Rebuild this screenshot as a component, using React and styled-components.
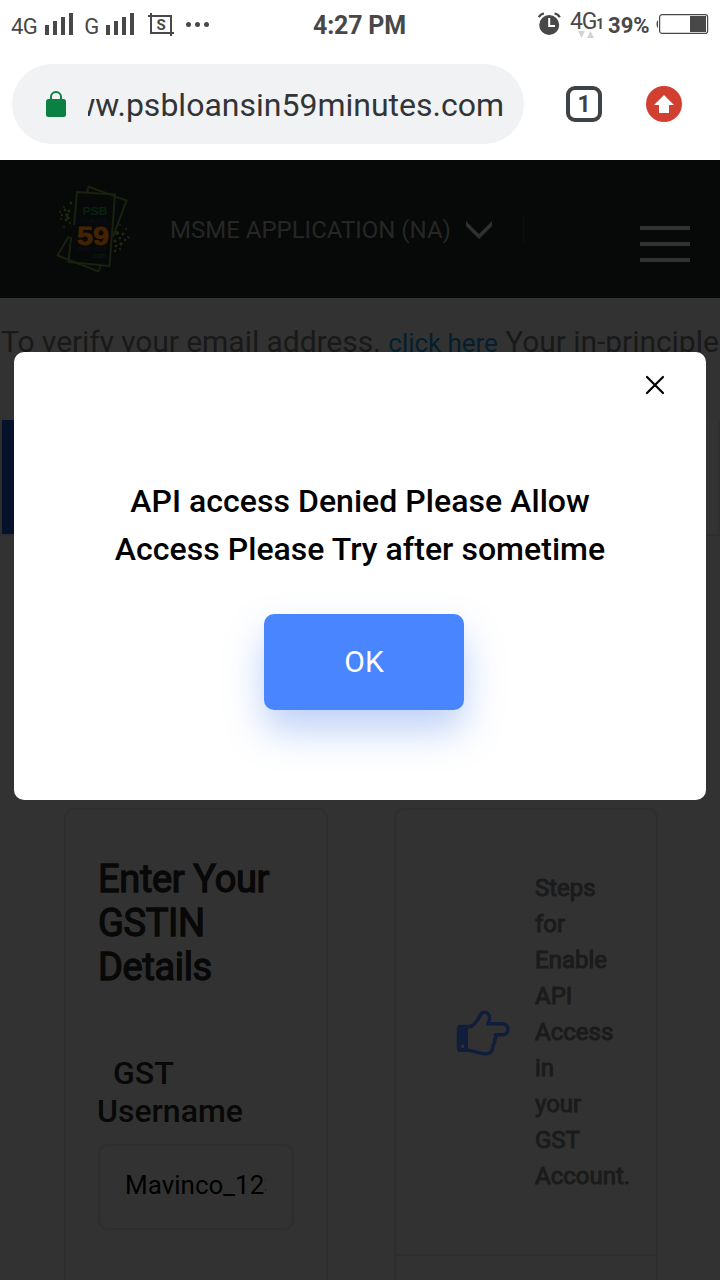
import React from "react";
import styled, { createGlobalStyle } from "styled-components";

const Global = createGlobalStyle`
  * { box-sizing: border-box; }
  body { margin: 0; background: #323232; font-family: Roboto, "Liberation Sans", sans-serif; }
`;

const Screen = styled.div`
  position: relative;
  width: 720px;
  height: 1280px;
  overflow: hidden;
  display: flex;
  flex-direction: column;
  background: #323232;
`;

const StatusBar = styled.header`
  flex: none;
  height: 50px;
  background: #fff;
  color: #484848;
  display: flex;
  justify-content: space-between;
  padding: 0 12px 0 11px;
`;

const StatusGroup = styled.div`
  display: flex;
  align-items: flex-start;
  width: ${(p) => p.$width || "auto"};
`;

const StatusText = styled.span`
  font-size: ${(p) => p.$size}px;
  font-weight: ${(p) => p.$weight || 400};
  line-height: 28px;
  letter-spacing: ${(p) => p.$spacing || 0}px;
  margin: ${(p) => p.$margin || 0};
  white-space: nowrap;
`;

const Glyph = styled.svg`
  display: block;
  flex: none;
  margin: ${(p) => p.$margin || 0};
`;

const AddressRow = styled.div`
  flex: none;
  height: 110px;
  padding: 14px 38px 16px 12px;
  background: #fff;
  display: flex;
  align-items: center;
`;

const AddressField = styled.div`
  width: 512px;
  height: 80px;
  border-radius: 40px;
  background: #f1f2f4;
  display: flex;
  align-items: center;
  padding: 0 20px 0 34px;
`;

const Url = styled.div`
  flex: 1;
  margin-left: 22px;
  overflow: hidden;
  display: flex;
  justify-content: flex-end;
  font-size: 32px;
  line-height: 44px;
  color: #333436;
  white-space: nowrap;
  padding-top: 2px;
`;

const TabCount = styled.div`
  width: 36px;
  height: 36px;
  margin: 0 44px 0 42px;
  border: 4px solid #3f4346;
  border-radius: 9px;
  color: #3f4346;
  font-size: 23px;
  font-weight: 700;
  line-height: 30px;
  text-align: center;
`;

const SiteHeader = styled.nav`
  flex: none;
  height: 138px;
  background: #070908;
  display: flex;
  align-items: flex-start;
  padding: 20px 30px 0 50px;
`;

const MenuLabel = styled.span`
  margin: 36px 0 0 30px;
  width: 280px;
  font-size: 24px;
  line-height: 28px;
  color: #262626;
  white-space: nowrap;
`;

const HeaderRule = styled.span`
  width: 1px;
  height: 28px;
  margin: 36px 0 0 30px;
  background: #0d0f0e;
`;

const Burger = styled.div`
  margin: 46px 0 0 auto;
  width: 50px;
  height: 36px;
  display: flex;
  flex-direction: column;
  justify-content: space-between;
`;

const BurgerLine = styled.span`
  height: 4px;
  background: #323232;
`;

const Notice = styled.p`
  flex: none;
  margin: 0;
  height: 122px;
  padding: 24px 0 0 1px;
  font-size: 30px;
  line-height: 40px;
  letter-spacing: -0.05px;
  color: #191919;
  white-space: nowrap;
`;

const NoticeLink = styled.a`
  font-size: 26px;
  color: #051e2d;
`;

const Tabs = styled.div`
  flex: none;
  height: 116px;
  padding: 0 2px;
  display: flex;
  border-bottom: 2px solid #2e2e2e;
  background: #2f2f2f;
`;

const Tab = styled.div`
  width: ${(p) => (p.$active ? "240px" : "auto")};
  flex: ${(p) => (p.$active ? "none" : "1")};
  background: ${(p) => (p.$active ? "#061229" : "#333333")};
`;

const Cards = styled.main`
  flex: 1;
  display: flex;
  align-items: flex-start;
  gap: 66px;
  padding: 272px 0 0 64px;
`;

const Card = styled.section`
  flex: none;
  width: 264px;
  height: 520px;
  border: 2px solid #2e2e2e;
  border-radius: 10px;
`;

const FormCard = styled(Card)`
  padding: 47px 32px 0 32px;
`;

const FormTitle = styled.h2`
  margin: 0 0 65px;
  font-size: 38px;
  line-height: 44px;
  font-weight: 400;
  letter-spacing: -0.35px;
  color: #080808;
  -webkit-text-stroke: 1.3px #080808;
`;

const FieldLabel = styled.label`
  display: block;
  margin-left: -1px;
  font-size: 32px;
  line-height: 38px;
  font-weight: 500;
  color: #080808;
`;

const FieldIndent = styled.span`
  display: inline-block;
  width: 16px;
`;

const Field = styled.div`
  width: 196px;
  height: 86px;
  margin-top: 14px;
  border: 2px solid #2e2e2e;
  border-radius: 10px;
  padding: 0 26px 0 25px;
  font-size: 26px;
  line-height: 79px;
  color: #000;
`;

const FieldValue = styled.div`
  overflow: hidden;
  white-space: nowrap;
`;

const StepHead = styled.div`
  height: 446px;
  border-bottom: 2px solid #2e2e2e;
  display: flex;
  align-items: center;
  padding: 0 0 1px 60px;
`;

const StepText = styled.div`
  width: 60px;
  margin-left: 25px;
  font-size: 24px;
  line-height: 36px;
  color: #1b1b1b;
  -webkit-text-stroke: 1px #1b1b1b;
`;

const Dialog = styled.div`
  position: absolute;
  left: 14px;
  top: 352px;
  width: 692px;
  height: 448px;
  border-radius: 10px;
  background: #fff;
  display: flex;
  flex-direction: column;
  align-items: center;
`;

const CloseButton = styled.button`
  align-self: flex-end;
  margin: 22px 40px 0 0;
  padding: 0;
  border: 0;
  width: 22px;
  height: 22px;
  background: none;
`;

const Message = styled.p`
  margin: 81px 0 0;
  width: 520px;
  text-align: center;
  font-size: 32px;
  line-height: 48px;
  font-weight: 500;
  letter-spacing: 0.04px;
  color: #000;
`;

const OkButton = styled.button`
  margin: 41px 0 0 8px;
  width: 200px;
  height: 96px;
  flex: none;
  border: 0;
  border-radius: 10px;
  background: #4885ff;
  box-shadow: 0 20px 38px rgba(66, 121, 232, 0.35);
  color: #fff;
  font: 400 30px/96px Roboto, sans-serif;
  padding: 0;
`;

const Signal = ({ margin }) => (
  <Glyph $margin={margin} width="29" height="22" viewBox="0 0 29 22" fill="#484848">
    <rect x="0" y="12" width="4" height="10" />
    <rect x="8" y="8" width="4" height="14" />
    <rect x="16" y="4" width="4" height="18" />
    <rect x="24" y="0" width="4" height="22" />
  </Glyph>
);

const leftDots = [[69, 211, 1.5], [67, 215, 1.8], [66, 220, 1.3], [70, 223, 0.9], [64, 227, 0.9], [61, 219, 0.9], [60, 212, 1], [64, 207, 0.9], [71, 203, 1.4], [65, 210, 1.4], [62, 215, 1.2], [68, 218, 1.8]];
const rightDots = [[117, 233, 2], [123, 234, 1.5], [120, 238, 1.3], [115, 241, 1.5], [121, 244, 1.7], [116, 246, 1.3], [115, 251, 1.2], [120, 249, 1], [126, 229, 1], [128, 237, 1], [125, 240, 1.3], [129, 238, 0.8], [120, 225, 0.8]];

const Logo = () => (
  <Glyph width="90" height="98" viewBox="50 180 90 98">
    <g fill="none" stroke="#18220e" strokeWidth="2">
      <path d="M87 193 L88.5 186.5 L126.5 200.5 L113 237" />
      <path d="M69 236 L57.5 255.5 L98.5 271.5 L100.5 266" />
      <path d="M74 225 L77 192 L115 194.5 L109.5 266 L68.5 262 L71 237" />
    </g>
    <g fill="#20290f">
      {leftDots.concat(rightDots).map(([x, y, r], i) => (
        <circle key={i} cx={x} cy={y} r={r} />
      ))}
    </g>
    <g fontFamily="Liberation Sans, sans-serif" fontWeight="700">
      <text x="82.5" y="215" fontSize="11.5" textLength="25" lengthAdjust="spacingAndGlyphs" fill="#06230f">PSB</text>
      <text x="75.5" y="222.500" fontSize="7.5" textLength="32" lengthAdjust="spacingAndGlyphs" fill="#090d1a">LOANS</text>
      <text x="71" y="229" fontSize="5" fill="#090d1a">IN</text>
      <text x="77" y="244.6" fontSize="26" textLength="32" lengthAdjust="spacingAndGlyphs" stroke="#432303" strokeWidth="0.8" fill="#432303">59</text>
      <text x="77" y="251" fontSize="5.5" textLength="30" lengthAdjust="spacingAndGlyphs" fill="#090d1a">MINUTES</text>
      <text x="91" y="257.5" fontSize="7.5" textLength="15" lengthAdjust="spacingAndGlyphs" fontWeight="400" fill="#06230f">.com</text>
    </g>
  </Glyph>
);

const PointingHand = () => (
  <Glyph $margin="2px 0 0" width="54" height="48" viewBox="456 1009 54 48">
    <path d="M459.5 1026.5 H471 C475 1024 478.500 1019 480.500 1014.800 C482 1011.500 486 1011.500 488.500 1014.300 C490.500 1017 489.500 1020.500 487.800 1023.700 H502.500 C509.800 1024.500 509.800 1034.500 502.500 1034.800 H495.300 C496.500 1037 495.500 1038.500 494.500 1039.500 C495.500 1042 494 1043.800 493 1045 C493.500 1050 491 1053.600 486 1053.800 C480 1054.200 475 1051 468 1050.300 H459.500 Z" fill="none" stroke="#101d3b" strokeWidth="3.4" strokeLinejoin="round" />
    <path fillRule="evenodd" fill="#101d3b" d="M460 1025.500 H468 V1051.500 H460 Q456.800 1051.500 456.800 1048.500 V1028.500 Q456.800 1025.500 460 1025.500 Z M462.400 1044.200 a2 2 0 1 0 0.010 0 Z" />
  </Glyph>
);

export default function App() {
  return (
    <Screen>
      <Global />
      <StatusBar>
        <StatusGroup $width="302px">
          <StatusText $size={22} $spacing={-0.6} $margin="13px 0 0">4G</StatusText>
          <Signal margin="13px 0 0 8px" />
          <StatusText $size={22} $spacing={-0.6} $margin="13px 0 0 10px">G</StatusText>
          <Signal margin="13px 0 0 7px" />
          <Glyph $margin="13px 0 0 13px" width="27" height="24" viewBox="0 0 27 24" fill="none" stroke="#484848" strokeWidth="2">
            <path d="M0 3H23V23M3 0V20H26" />
            <text x="8.500" y="16.500" fontFamily="Roboto, sans-serif" fontSize="15" fontWeight="700" fill="#484848" stroke="none">S</text>
          </Glyph>
          <Glyph $margin="21px 0 0 10px" width="26" height="7" viewBox="0 0 26 7" fill="#484848">
            <circle cx="3.500" cy="3.500" r="2.500" />
            <circle cx="12.500" cy="3.500" r="2.500" />
            <circle cx="21.500" cy="3.500" r="2.500" />
          </Glyph>
        </StatusGroup>
        <StatusText $size={25} $weight={700} $spacing={-0.2} $margin="12px auto 0 0">4:27 PM</StatusText>
        <StatusGroup $width="171px">
          <Glyph $margin="12px 0 0 1px" width="24" height="24" viewBox="0 0 24 24">
            <circle cx="11.200" cy="13" r="10" fill="#484848" />
            <path d="M0.800 5.200Q2.500 2 6 1.500M16.500 1.500Q20 2 21.800 5.200" fill="none" stroke="#484848" strokeWidth="2.200" />
            <path d="M11.200 6V14H17" fill="none" stroke="#fff" strokeWidth="2" />
          </Glyph>
          <StatusText $size={23} $spacing={-1.3} $margin="8px 0 0 8px">4G</StatusText>
          <StatusText $size={14} $weight={700} $margin="10px 0 0 0">1</StatusText>
          <Glyph $margin="31px 0 0 -27px" width="18" height="8" viewBox="0 0 18 8" fill="#d2d2d2">
            <path d="M1 0H8L4.500 7ZM10 7H17L13.500 0Z" />
          </Glyph>
          <StatusText $size={22} $weight={700} $margin="12px 0 0 13px">39%</StatusText>
          <Glyph $margin="13px 0 0 6px" width="53" height="22" viewBox="0 0 53 22">
            <path d="M2 7Q0.500 8 0.500 11T2 15Z" fill="#484848" />
            <rect x="3.600" y="1.600" width="48" height="18.800" rx="2.500" fill="none" stroke="#484848" strokeWidth="1.200" />
            <rect x="34" y="3" width="16" height="16" fill="#484848" />
          </Glyph>
        </StatusGroup>
      </StatusBar>
      <AddressRow>
        <AddressField>
          <Glyph width="20" height="26" viewBox="0 0 20 26">
            <path d="M5 10V6a5 5 0 0 1 10 0v4" fill="none" stroke="#0b8043" strokeWidth="2" />
            <rect y="8" width="20" height="18" rx="2.500" fill="#0b8043" />
          </Glyph>
          <Url>www.psbloansin59minutes.com</Url>
        </AddressField>
        <TabCount>1</TabCount>
        <Glyph width="36" height="36" viewBox="0 0 36 36">
          <circle cx="18" cy="18" r="18" fill="#d23f31" />
          <path d="M18 9L28 19H23V27H13V19H8Z" fill="#fff" />
        </Glyph>
      </AddressRow>
      <SiteHeader>
        <Logo />
        <MenuLabel>MSME APPLICATION (NA)</MenuLabel>
        <Glyph $margin="40px 0 0 15px" width="28" height="22" viewBox="0 0 28 22">
          <path d="M1 1L14 14L27 1V6L14 19L1 6Z" fill="#303030" />
        </Glyph>
        <HeaderRule />
        <Burger>
          <BurgerLine />
          <BurgerLine />
          <BurgerLine />
        </Burger>
      </SiteHeader>
      <Notice>
        To verify your email address. <NoticeLink>click here</NoticeLink> Your in-principle
      </Notice>
      <Tabs>
        <Tab $active />
        <Tab />
      </Tabs>
      <Cards>
        <FormCard>
          <FormTitle>Enter Your GSTIN Details</FormTitle>
          <FieldLabel><FieldIndent />GST Username</FieldLabel>
          <Field>
            <FieldValue>Mavinco_123</FieldValue>
          </Field>
        </FormCard>
        <Card>
          <StepHead>
            <PointingHand />
            <StepText>Steps for Enable API Access in your GST Account.</StepText>
          </StepHead>
        </Card>
      </Cards>
      <Dialog>
        <CloseButton aria-label="Close">
          <Glyph width="22" height="22" viewBox="0 0 22 22">
            <path d="M3 3L19 19M19 3L3 19" stroke="#000" strokeWidth="2.200" strokeLinecap="round" />
          </Glyph>
        </CloseButton>
        <Message>API access Denied Please Allow Access Please Try after sometime</Message>
        <OkButton>OK</OkButton>
      </Dialog>
    </Screen>
  );
}
